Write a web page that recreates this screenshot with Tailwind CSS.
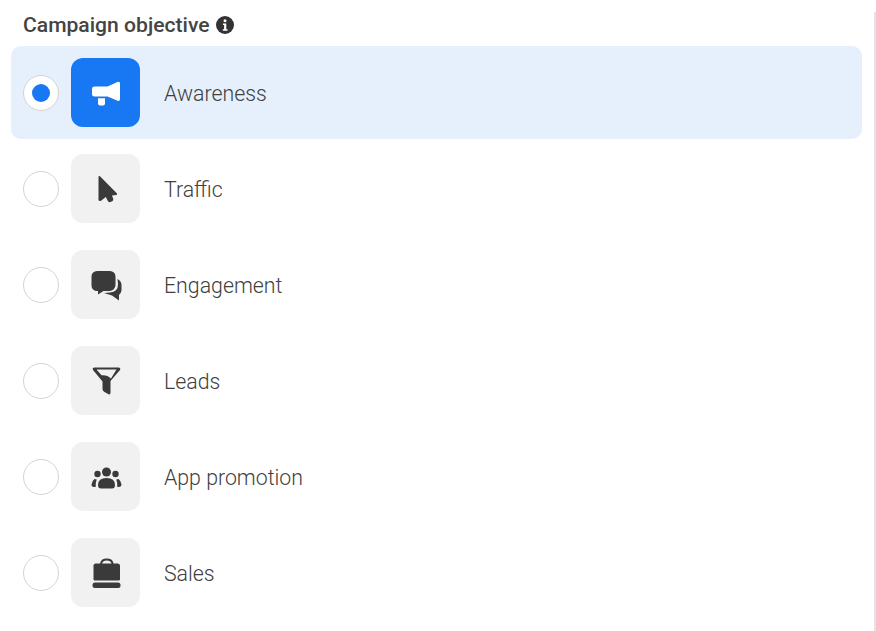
<!DOCTYPE html>
<html>
<head>
<meta charset="utf-8">
<script src="https://cdn.jsdelivr.net/npm/@tailwindcss/browser@4"></script>
</head>
<body class="bg-white">
<div class="w-[876px] h-[631px] overflow-hidden flex font-['Roboto',sans-serif] text-[#404040]">
  <div class="w-[874px] shrink-0 pt-[8px] pl-[11px] pr-[12px]">
    <div class="h-[34px] mb-[4px] flex items-center pl-[12px] gap-[6px] text-[21.1px] leading-[26px] font-medium text-[#444444]">
      <span>Campaign objective</span>
      <svg class="w-[18px] h-[18px]" viewBox="0 0 18 18"><circle cx="9" cy="9" r="9" fill="#333"/><circle cx="9" cy="4.800" r="1.500" fill="#fff"/><path d="M6.900 7.600h3.400v5.600h1.200v1.500H6.800v-1.500h1.300V9.100H6.900z" fill="#fff"/></svg>
    </div>
    <div class="flex flex-col gap-[3px]">
      <div class="h-[93px] rounded-[10px] bg-[#e6f0fc] flex items-center pl-[12px]">
        <div class="w-[36px] h-[36px] rounded-full bg-white border border-[#d3d3d3] flex items-center justify-center"><div class="w-[18px] h-[18px] rounded-full bg-[#1877f2]"></div></div>
        <div class="ml-[12px] w-[69px] h-[69px] rounded-[12px] bg-[#1877f2] flex items-center justify-center">
          <svg class="w-[30px] h-[30px]" viewBox="0 0 30 30" fill="#fff"><path d="M3.500 8.500H16.500L26.500 4q2.500-1 2.500 1.500V21q0 2.500-2.500 1.800L16.500 18.500H3.500a2.500 2.500 0 0 1-2.500-2.500V11A2.500 2.500 0 0 1 3.500 8.500z"/><path d="M7 20.200h7V25.500a2 2 0 0 1-2 2H9a2 2 0 0 1-2-2z"/></svg>
        </div>
        <span class="ml-[24px] pt-[2px] text-[21.3px] leading-[26px] font-light">Awareness</span>
      </div>
      <div class="h-[93px] rounded-[10px] flex items-center pl-[12px]">
        <div class="w-[36px] h-[36px] rounded-full bg-white border border-[#d3d3d3]"></div>
        <div class="ml-[12px] w-[69px] h-[69px] rounded-[12px] bg-[#f1f1f1] flex items-center justify-center">
          <svg class="w-[30px] h-[30px]" viewBox="0 0 30 30" fill="#3a3a3a"><path d="M7.500 3q0-1.500 1.500-.8L26 19.500q.6 1.200-.8 1.500l-4.200.4 1.200 3.400q.5 1.700-1 2.500l-1.800.8q-1.800.6-2.600-1L14.800 23 10 26.800q-2 .8-2.500-.8z"/></svg>
        </div>
        <span class="ml-[24px] pt-[2px] text-[21.3px] leading-[26px] font-light">Traffic</span>
      </div>
      <div class="h-[93px] rounded-[10px] flex items-center pl-[12px]">
        <div class="w-[36px] h-[36px] rounded-full bg-white border border-[#d3d3d3]"></div>
        <div class="ml-[12px] w-[69px] h-[69px] rounded-[12px] bg-[#f1f1f1] flex items-center justify-center">
          <svg class="w-[32px] h-[32px]" viewBox="0 0 32 32" fill="#3a3a3a"><path d="M7 2h13a5.500 5.500 0 0 1 5.500 5.500v8.500a6 6 0 0 1-6 6h-6l-5.500 3.500V22H7a5.500 5.500 0 0 1-5.500-5.500V7.500A5.500 5.500 0 0 1 7 2z"/><path d="M27.500 10q3.500 1.500 4 5.500v6q-.5 3-2.500 4.500v5.500L22 26.500l-8-2.500 6-.5q8-.5 8-8z"/></svg>
        </div>
        <span class="ml-[24px] pt-[2px] text-[21.3px] leading-[26px] font-light">Engagement</span>
      </div>
      <div class="h-[93px] rounded-[10px] flex items-center pl-[12px]">
        <div class="w-[36px] h-[36px] rounded-full bg-white border border-[#d3d3d3]"></div>
        <div class="ml-[12px] w-[69px] h-[69px] rounded-[12px] bg-[#f1f1f1] flex items-center justify-center">
          <svg class="w-[30px] h-[30px]" viewBox="0 0 30 30" fill="#3a3a3a"><path fill-rule="evenodd" d="M3.500 1.500h24q2.500.3 1.500 2.500L19.500 15v12q-.3 2-2 1.300l-4-2.300q-2-1-2-3v-7.500L2 4q-1-2.200 1.500-2.500zM5.500 3.500l5 5.800q6-.5 9.500 3.300l5.500-9.100z"/></svg>
        </div>
        <span class="ml-[24px] pt-[2px] text-[21.3px] leading-[26px] font-light">Leads</span>
      </div>
      <div class="h-[93px] rounded-[10px] flex items-center pl-[12px]">
        <div class="w-[36px] h-[36px] rounded-full bg-white border border-[#d3d3d3]"></div>
        <div class="ml-[12px] w-[69px] h-[69px] rounded-[12px] bg-[#f1f1f1] flex items-center justify-center">
          <svg class="w-[32px] h-[32px]" viewBox="0 0 32 32" fill="#3a3a3a"><circle cx="16.500" cy="11" r="4.500"/><circle cx="7.500" cy="13" r="3.200"/><circle cx="25.500" cy="13" r="3.200"/><path d="M8 24q0-7 8.500-7T25 24q0 3.500-3 3.500H11q-3 0-3-3.500z"/><path d="M4.500 18q1 .2 2.200.4-1.200 3-1 7.600H4q-2.700-.4-2.500-2.500.3-3.500 3-5.500zM28.500 18q-1 .2-2.200.4 1.200 3 1 7.600H29q2.700-.4 2.500-2.500-.3-3.500-3-5.500z"/></svg>
        </div>
        <span class="ml-[24px] pt-[2px] text-[21.3px] leading-[26px] font-light">App promotion</span>
      </div>
      <div class="h-[93px] rounded-[10px] flex items-center pl-[12px]">
        <div class="w-[36px] h-[36px] rounded-full bg-white border border-[#d3d3d3]"></div>
        <div class="ml-[12px] w-[69px] h-[69px] rounded-[12px] bg-[#f1f1f1] flex items-center justify-center">
          <svg class="w-[30px] h-[30px]" viewBox="0 0 30 30" fill="#3a3a3a"><path d="M4.500 5.500h22.500q2 .3 2 2v14q0 1-1.500 1H4q-1.500 0-1.500-1v-14q0-1.700 2-2z"/><path d="M10 6q.5-4.500 5.800-4.500T21.600 6" fill="none" stroke="#3a3a3a" stroke-width="2"/><rect x="1.500" y="24.500" width="28" height="5.500" rx="2.500"/></svg>
        </div>
        <span class="ml-[24px] pt-[2px] text-[21.3px] leading-[26px] font-light">Sales</span>
      </div>
    </div>
  </div>
  <div class="w-[2px] h-full mt-[12px] bg-[#e4e4e4]"></div>
</div>
</body>
</html>
